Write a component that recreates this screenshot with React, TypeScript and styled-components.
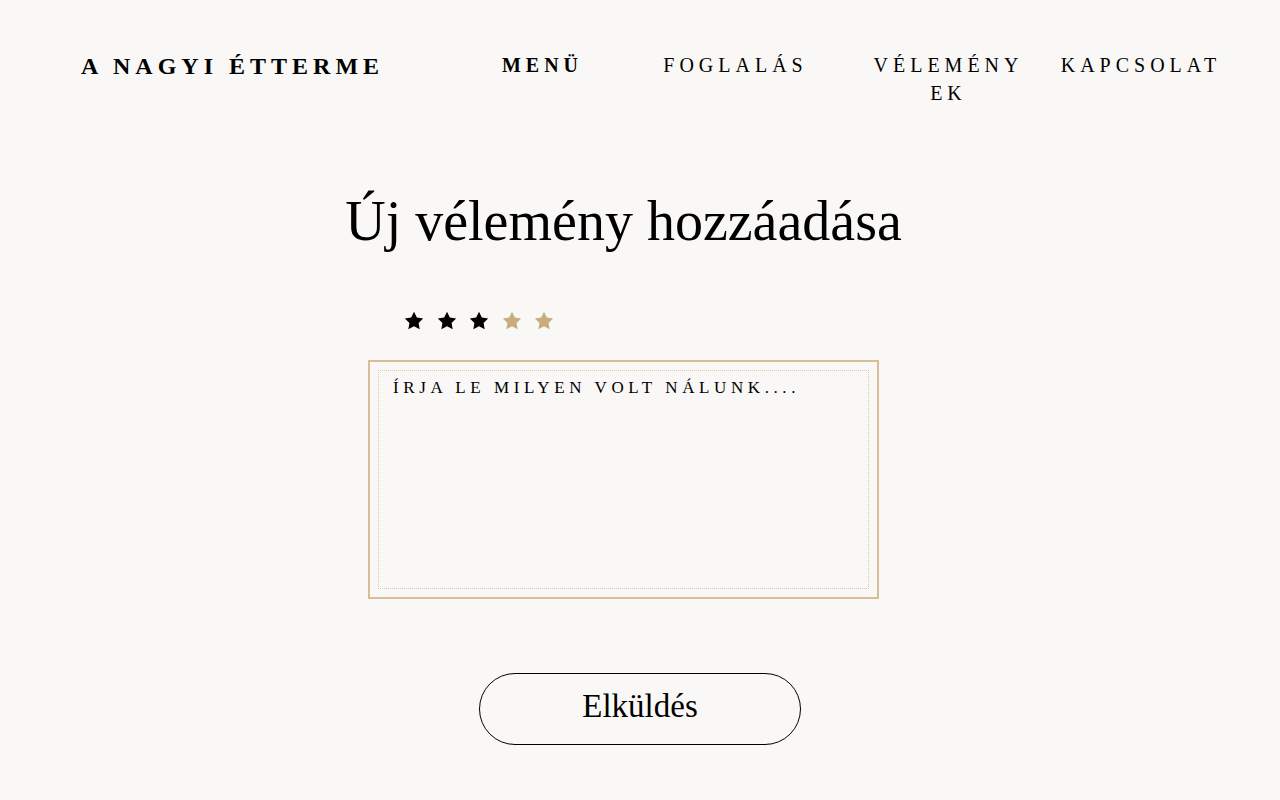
import React, { useState } from "react";
import styled, { createGlobalStyle } from "styled-components";

const GlobalStyle = createGlobalStyle`
  html, body {
    margin: 0;
    padding: 0;
    background: #f9f8f6;
  }
  body {
    font-family: "Liberation Serif", "Times New Roman", serif;
    color: #000;
  }
  * { box-sizing: border-box; }
`;

const Page = styled.div`
  min-height: 800px;
  background: #f9f8f6;
`;

const Header = styled.header`
  display: flex;
  justify-content: space-between;
  align-items: flex-start;
  padding: 51px 29px 0 81px;
`;

const Logo = styled.div`
  padding-top: 1px;
  font-size: 24px;
  line-height: 28px;
  font-weight: 700;
  letter-spacing: 5px;
  white-space: nowrap;
`;

const Nav = styled.nav`
  display: grid;
  grid-template-columns: 125px 261px 165px 220px;
  align-items: start;
`;

const NavItem = styled.a<{ $bold?: boolean }>`
  display: block;
  text-align: center;
  font-size: 20px;
  line-height: 28px;
  letter-spacing: 5px;
  font-weight: ${(p) => (p.$bold ? 700 : 400)};
  color: #000;
  text-decoration: none;
  word-break: break-all;
  cursor: pointer;
`;

const Main = styled.main`
  display: flex;
  flex-direction: column;
  align-items: center;
  padding-top: 83px;
`;

const FormColumn = styled.div`
  width: 511px;
  margin-right: 33px;
  display: flex;
  flex-direction: column;
  align-items: center;
`;

const Title = styled.h1`
  margin: 0;
  font-size: 56px;
  font-weight: 400;
  line-height: 62px;
  white-space: nowrap;
`;

const Stars = styled.div`
  align-self: flex-start;
  display: flex;
  gap: 10.5px;
  margin: 58px 0 0 35px;
`;

const StarButton = styled.button`
  border: 0;
  padding: 0;
  background: none;
  width: 22px;
  height: 22px;
  display: block;
  cursor: pointer;
`;

const Frame = styled.div`
  margin-top: 28px;
  width: 511px;
  height: 239px;
  border: 2px solid #d9bd96;
  padding: 8px;
`;

const TextArea = styled.textarea`
  display: block;
  width: 100%;
  height: 100%;
  resize: none;
  border: 1px dotted #dcc6a4;
  background: transparent;
  padding: 7px 14px;
  font-family: "Liberation Serif", "Times New Roman", serif;
  font-size: 17px;
  letter-spacing: 4.6px;
  text-transform: uppercase;
  color: #000;
  outline: none;
  &::placeholder {
    color: #000;
    opacity: 1;
  }
`;

const SubmitButton = styled.button`
  margin-top: 74px;
  width: 322px;
  height: 72px;
  border: 1px solid #000;
  border-radius: 36px;
  background: transparent;
  font-family: "Liberation Serif", "Times New Roman", serif;
  font-size: 33px;
  color: #000;
  cursor: pointer;
  padding: 0 0 5px;
`;

const Star: React.FC<{ color: string }> = ({ color }) => (
  <svg width="22" height="22" viewBox="0 0 24 24">
    <polygon
      fill={color}
      points="12,2 15.09,8.26 22,9.27 17,14.14 18.18,21.02 12,17.77 5.82,21.02 7,14.14 2,9.27 8.91,8.26"
    />
  </svg>
);

export default function App() {
  const [rating, setRating] = useState(3);
  return (
    <Page>
      <GlobalStyle />
      <Header>
        <Logo>A NAGYI ÉTTERME</Logo>
        <Nav>
          <NavItem $bold>MENÜ</NavItem>
          <NavItem>FOGLALÁS</NavItem>
          <NavItem>VÉLEMÉNYEK</NavItem>
          <NavItem>KAPCSOLAT</NavItem>
        </Nav>
      </Header>
      <Main>
        <FormColumn>
          <Title>Új vélemény hozzáadása</Title>
          <Stars>
            {[1, 2, 3, 4, 5].map((n) => (
              <StarButton key={n} onClick={() => setRating(n)} aria-label={`${n}`}>
                <Star color={n <= rating ? "#000" : "#c8ad7c"} />
              </StarButton>
            ))}
          </Stars>
          <Frame>
            <TextArea placeholder="Írja le milyen volt nálunk...." />
          </Frame>
        </FormColumn>
        <SubmitButton>Elküldés</SubmitButton>
      </Main>
    </Page>
  );
}
